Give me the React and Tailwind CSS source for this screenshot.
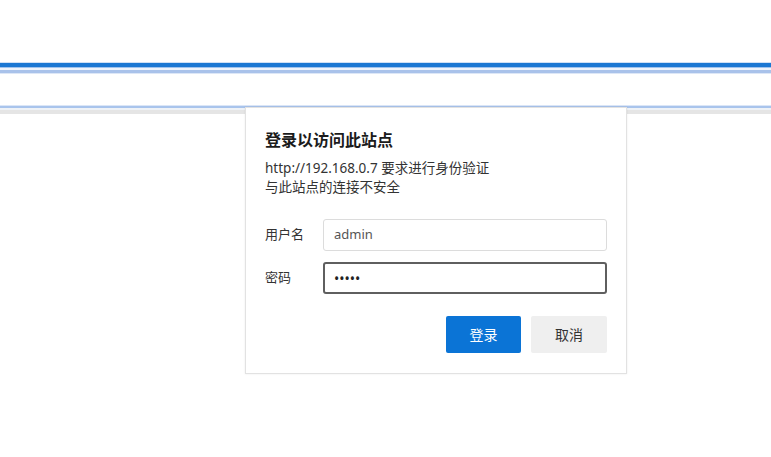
export default function App() {
  return (
    <div
      className="relative w-[771px] h-[457px] bg-white overflow-hidden"
      style={{ fontFamily: '"Noto Sans", "Noto Sans CJK SC", sans-serif' }}
    >
      {/* browser chrome lines */}
      <div className="h-[62px]" />
      <div className="h-px bg-[#cfe0f5]" />
      <div className="h-[4px] bg-[#1b77d3]" />
      <div className="h-px bg-[#9fc3ee]" />
      <div className="h-[2px] bg-[#eef3fb]" />
      <div className="h-[3px] bg-[#a9c2ea]" />
      <div className="h-px bg-[#dde7f7]" />
      <div className="h-[31px]" />
      <div className="h-px bg-[#dbe6f7]" />
      <div className="h-[2px] bg-[#a9c4ec]" />
      <div className="h-[2px] bg-[#eef2f7]" />
      <div className="h-[4px] bg-[#e5e5e5]" />

      {/* auth dialog */}
      <div className="absolute left-[245px] top-[107px] w-[382px] h-[267px] bg-white border border-[#e2e2e2] shadow-[0_0_2px_rgba(0,0,0,0.08)] pt-[22px] pl-[19px] pr-[19px] flex flex-col">
        <div className="text-[16px] leading-[20px] font-bold text-[#1b1b1b]">登录以访问此站点</div>
        <div className="mt-[9px] text-[13.5px] leading-[19px] text-[#333]">
          <div>http://192.168.0.7 要求进行身份验证</div>
          <div>与此站点的连接不安全</div>
        </div>

        <div className="mt-[22px] flex flex-col gap-[11px]">
          <div className="flex items-center">
            <span className="w-[58px] shrink-0 text-[13px] text-[#333]">用户名</span>
            <div className="flex-1 h-[32px] border border-[#dcdcdc] rounded-[3px] flex items-center px-[10px] text-[13px] text-[#555]">
              admin
            </div>
          </div>
          <div className="flex items-center">
            <span className="w-[58px] shrink-0 text-[13px] text-[#333]">密码</span>
            <div className="flex-1 h-[32px] border-2 border-[#5f5f5f] rounded-[3px] flex items-center px-[9px] text-[14px] text-[#222]">
              •••••
            </div>
          </div>
        </div>

        <div className="mt-[22px] flex justify-end gap-[10px]">
          <button className="w-[75px] h-[37px] rounded-[2px] bg-[#0b74d6] text-white text-[14px]">登录</button>
          <button className="w-[76px] h-[37px] rounded-[2px] bg-[#efefef] text-[#333] text-[14px]">取消</button>
        </div>
      </div>
    </div>
  )
}
